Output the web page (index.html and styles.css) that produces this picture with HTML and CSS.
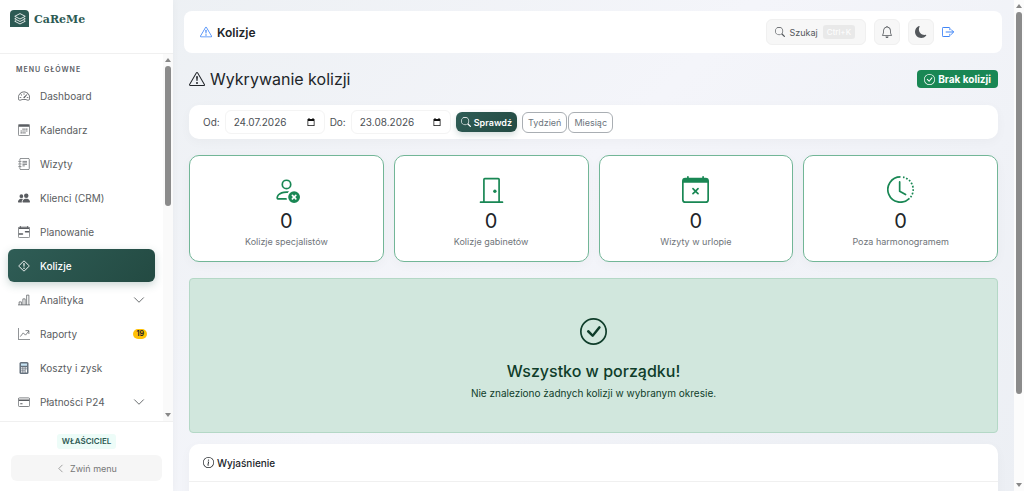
FILE: index.html
```html
<!DOCTYPE html>
<html lang="pl">
<head>
    <meta charset="UTF-8">
    <meta name="viewport" content="width=device-width, initial-scale=1.0">
    <title>Kolizje - CaReMe</title>
    <link rel="stylesheet" href="styles.css">
</head>
<body>
    <!-- Icons -->
    <svg class="sprite" aria-hidden="true">
        <symbol id="i-warning" viewBox="0 0 16 16">
            <path d="M7.938 2.016A.13.13 0 0 1 8.002 2a.13.13 0 0 1 .063.016.15.15 0 0 1 .054.057l6.857 11.667c.036.06.035.124.002.183a.2.2 0 0 1-.054.06.1.1 0 0 1-.066.017H1.146a.1.1 0 0 1-.066-.017.2.2 0 0 1-.054-.06.18.18 0 0 1 .002-.183L7.884 2.073a.15.15 0 0 1 .054-.057m1.044-.45a1.13 1.13 0 0 0-1.96 0L.165 13.233c-.457.778.091 1.767.98 1.767h13.713c.889 0 1.438-.99.98-1.767z"/>
            <path d="M7.002 12a1 1 0 1 1 2 0 1 1 0 0 1-2 0M7.1 5.995a.905.905 0 1 1 1.8 0l-.35 3.507a.552.552 0 0 1-1.1 0z"/>
        </symbol>
        <symbol id="i-search" viewBox="0 0 16 16">
            <path d="M11.742 10.344a6.5 6.5 0 1 0-1.397 1.398h-.001q.044.06.098.115l3.85 3.85a1 1 0 0 0 1.415-1.414l-3.85-3.85a1 1 0 0 0-.115-.1zM12 6.5a5.5 5.5 0 1 1-11 0 5.5 5.5 0 0 1 11 0"/>
        </symbol>
        <symbol id="i-bell" viewBox="0 0 16 16">
            <path d="M8 16a2 2 0 0 0 2-2H6a2 2 0 0 0 2 2M8 1.918l-.797.161A4 4 0 0 0 4 6c0 .628-.134 2.197-.459 3.742-.16.767-.376 1.566-.663 2.258h10.244c-.287-.692-.502-1.49-.663-2.258C12.134 8.197 12 6.628 12 6a4 4 0 0 0-3.203-3.92zM14.22 12c.223.447.481.801.78 1H1c.299-.199.557-.553.78-1C2.68 10.2 3 6.88 3 6c0-2.42 1.72-4.44 4.005-4.901a1 1 0 1 1 1.99 0A5 5 0 0 1 13 6c0 .88.32 4.2 1.22 6"/>
        </symbol>
        <symbol id="i-moon" viewBox="0 0 16 16">
            <path d="M6 .278a.77.77 0 0 1 .08.858 7.2 7.2 0 0 0-.878 3.46c0 4.021 3.278 7.277 7.318 7.277q.792-.001 1.533-.16a.79.79 0 0 1 .81.316.73.73 0 0 1-.031.893A8.35 8.35 0 0 1 8.344 16C3.734 16 0 12.286 0 7.71 0 4.266 2.114 1.312 5.124.06A.75.75 0 0 1 6 .278"/>
        </symbol>
        <symbol id="i-logout" viewBox="0 0 16 16">
            <path fill="none" stroke="currentColor" stroke-width="1.3" stroke-linecap="round" stroke-linejoin="round" d="M10.5 5V3a1 1 0 0 0-1-1h-8a1 1 0 0 0-1 1v10a1 1 0 0 0 1 1h8a1 1 0 0 0 1-1v-2M5.5 8h9.8M12.5 5l3 3-3 3"/>
        </symbol>
        <symbol id="i-check" viewBox="0 0 16 16">
            <path d="M8 15A7 7 0 1 1 8 1a7 7 0 0 1 0 14m0 1A8 8 0 1 0 8 0a8 8 0 0 0 0 16"/>
            <path d="m10.97 4.97-.02.022-3.473 4.425-2.093-2.094a.75.75 0 0 0-1.06 1.06L6.97 11.03a.75.75 0 0 0 1.079-.02l3.992-4.99a.75.75 0 0 0-1.071-1.05"/>
        </symbol>
        <symbol id="i-info" viewBox="0 0 16 16">
            <path d="M8 15A7 7 0 1 1 8 1a7 7 0 0 1 0 14m0 1A8 8 0 1 0 8 0a8 8 0 0 0 0 16"/>
            <path d="m8.93 6.588-2.29.287-.082.38.45.083c.294.07.352.176.288.469l-.738 3.468c-.194.897.105 1.319.808 1.319.545 0 1.178-.252 1.465-.598l.088-.416c-.2.176-.492.246-.686.246-.275 0-.375-.193-.304-.533zM9 4.5a1 1 0 1 1-2 0 1 1 0 0 1 2 0"/>
        </symbol>
        <symbol id="i-down" viewBox="0 0 16 16">
            <path fill="none" stroke="currentColor" stroke-width="1.2" stroke-linecap="round" stroke-linejoin="round" d="m2 5 6 6 6-6"/>
        </symbol>
        <symbol id="i-left" viewBox="0 0 16 16">
            <path fill="none" stroke="currentColor" stroke-width="1.2" stroke-linecap="round" stroke-linejoin="round" d="M11 2 5 8l6 6"/>
        </symbol>
        <symbol id="i-layers" viewBox="0 0 16 16">
            <path fill="none" stroke="currentColor" stroke-width="1.1" stroke-linejoin="round" d="M8 .8 15 4.4 8 8 1 4.4zM3 6.6 1 7.7l7 3.6 7-3.6-2-1.1M3 9.9 1 11l7 3.6 7-3.6-2-1.1"/>
        </symbol>
        <symbol id="i-speed" viewBox="0 0 16 16">
            <path d="M8 4a.5.5 0 0 1 .5.5V6a.5.5 0 0 1-1 0V4.5A.5.5 0 0 1 8 4M3.732 5.732a.5.5 0 0 1 .707 0l.915.914a.5.5 0 1 1-.708.708l-.914-.915a.5.5 0 0 1 0-.707M2 10a.5.5 0 0 1 .5-.5h1.586a.5.5 0 0 1 0 1H2.5A.5.5 0 0 1 2 10m9.5 0a.5.5 0 0 1 .5-.5h1.5a.5.5 0 0 1 0 1H12a.5.5 0 0 1-.5-.5m.754-4.246a.39.39 0 0 0-.527-.02L7.547 9.31a.91.91 0 1 0 1.302 1.258l3.434-4.297a.39.39 0 0 0-.029-.518z"/>
            <path fill-rule="evenodd" d="M0 10a8 8 0 1 1 15.547 2.661c-.442 1.253-1.845 1.602-2.932 1.25C11.309 13.488 9.475 13 8 13c-1.474 0-3.31.488-4.615.911-1.087.352-2.49.003-2.932-1.25A8 8 0 0 1 0 10m8-7a7 7 0 0 0-6.603 9.329c.203.575.923.876 1.68.63C4.397 12.533 6.358 12 8 12s3.604.532 4.923.96c.757.245 1.477-.056 1.68-.631A7 7 0 0 0 8 3"/>
        </symbol>
        <symbol id="i-calendar" viewBox="0 0 16 16">
            <rect x=".5" y=".5" width="15" height="15" rx="1.5" fill="none" stroke="currentColor"/>
            <path d="M1 1h14v2.8H1zM6 6h1.5v1.5H6zm2.5 0H10v1.5H8.5zM11 6h1.5v1.5H11zM3.5 8.5H5V10H3.500zm2.500 0h1.500V10H6zm2.500 0H10V10H8.500zm2.500 0h1.500V10H11zM3.500 11H5v1.500H3.500zm2.500 0h1.500v1.500H6zm2.500 0H10v1.500H8.500z"/>
        </symbol>
        <symbol id="i-journal" viewBox="0 0 16 16">
            <path fill="none" stroke="currentColor" stroke-linecap="round" d="M2.500 3V2A1.500 1.500 0 0 1 4 .5h9.500A1.500 1.500 0 0 1 15 2v12a1.500 1.500 0 0 1-1.500 1.500H4A1.500 1.500 0 0 1 2.500 14v-1M2.500 6v1M2.500 9.500v1M1 4.500h3M1 8h3M1 11.500h3M6.500 4.500h5M6.500 6.500h5M6.500 8.500h5M6.500 10.500h2"/>
        </symbol>
        <symbol id="i-people" viewBox="0 0 16 16">
            <path d="M7 14s-1 0-1-1 1-4 5-4 5 3 5 4-1 1-1 1zm4-6a3 3 0 1 0 0-6 3 3 0 0 0 0 6m-5.784 6A2.24 2.24 0 0 1 5 13c0-1.355.68-2.75 1.936-3.72A6.3 6.3 0 0 0 5 9c-4 0-5 3-5 4s1 1 1 1zM4.500 8a2.500 2.500 0 1 0 0-5 2.500 2.500 0 0 0 0 5"/>
        </symbol>
        <symbol id="i-plan" viewBox="0 0 16 16">
            <path fill="none" stroke="currentColor" d="M2 1.500h12A1.500 1.500 0 0 1 15.500 3v11a1.500 1.500 0 0 1-1.500 1.500H2A1.500 1.500 0 0 1 .5 14V3A1.500 1.500 0 0 1 2 1.500z"/>
            <path d="M1 2h14v2H1zM3 0h1v2H3zm9 0h1v2h-1zM10 6.500h5v2h-5a1 1 0 0 1 0-2M1 9.500h5a1 1 0 0 1 0 2H1z"/>
        </symbol>
        <symbol id="i-diamond" viewBox="0 0 16 16">
            <rect x="3" y="3" width="10" height="10" rx="1" transform="rotate(45 8 8)" fill="none" stroke="currentColor" stroke-width="1.2"/>
            <path d="M7.001 11a1 1 0 1 1 2 0 1 1 0 0 1-2 0M7.1 4.995a.905.905 0 1 1 1.8 0l-.35 3.507a.553.553 0 0 1-1.1 0z"/>
        </symbol>
        <symbol id="i-bars" viewBox="0 0 16 16">
            <path fill="none" stroke="currentColor" d="M1.500 14.500v-4h3v4M6.500 14.500v-8h3v8M11.500 14.500v-13h3v13M0 14.500h16"/>
        </symbol>
        <symbol id="i-graph" viewBox="0 0 16 16">
            <path fill="none" stroke="currentColor" stroke-linejoin="round" d="M.5 0v15.500H16M3 11.500l4-5 3 3L14.500 4M10 3.500h4.500V8"/>
        </symbol>
        <symbol id="i-calc" viewBox="0 0 16 16">
            <rect x="2" y="0" width="12" height="16" rx="2" fill="#65717d"/>
            <path fill="#c7e4f4" d="M4 2h8v3H4z"/>
            <path fill="#fff" d="M4 7h2v1.500H4zm3 0h2v1.500H7zm3 0h2v1.500h-2zM4 9.700h2v1.500H4zm3 0h2v1.500H7zM4 12.400h2V14H4zm3 0h2V14H7zm3-2.700h2V14h-2z"/>
        </symbol>
        <symbol id="i-card" viewBox="0 0 16 16">
            <rect x=".5" y="2.500" width="15" height="11.500" rx="1.500" fill="none" stroke="currentColor"/>
            <path d="M1 4.500h14v2H1zM3 9.500h3v1.500H3z"/>
        </symbol>
        <symbol id="i-date" viewBox="0 0 16 16">
            <path fill-rule="evenodd" d="M1 2h2V0h2v2h6V0h2v2h2v14H1zm1.500 4v8.500h11V6z"/>
        </symbol>
        <symbol id="i-person-x" viewBox="0 0 16 16">
            <path d="M11 5a3 3 0 1 1-6 0 3 3 0 0 1 6 0M8 7a2 2 0 1 0 0-4 2 2 0 0 0 0 4m.256 7a4.500 4.500 0 0 1-.229-1.004H3c.001-.246.154-.986.832-1.664C4.484 10.68 5.711 10 8 10q.39 0 .74.025c.226-.341.496-.65.804-.918Q8.844 9.002 8 9c-5 0-6 3-6 4s1 1 1 1z"/>
            <path d="M12.500 16a3.500 3.500 0 1 0 0-7 3.500 3.500 0 0 0 0 7m-.646-4.854.646.647.646-.647a.5.5 0 0 1 .708.708l-.647.646.647.646a.5.5 0 0 1-.708.708l-.646-.647-.646.647a.5.5 0 0 1-.708-.708l.647-.646-.647-.646a.5.5 0 0 1 .708-.708"/>
        </symbol>
        <symbol id="i-door" viewBox="0 0 16 16">
            <path d="M3 2a1 1 0 0 1 1-1h8a1 1 0 0 1 1 1v13h1.500a.5.5 0 0 1 0 1h-13a.5.5 0 0 1 0-1H3zm1 13h8V2H4z"/>
            <path d="M9 9a1 1 0 1 0 2 0 1 1 0 0 0-2 0"/>
        </symbol>
        <symbol id="i-calendar-x" viewBox="0 0 16 16">
            <path d="M6.146 7.146a.5.5 0 0 1 .708 0L8 8.293l1.146-1.147a.5.5 0 1 1 .708.708L8.707 9l1.147 1.146a.5.5 0 0 1-.708.708L8 9.707l-1.146 1.147a.5.5 0 0 1-.708-.708L7.293 9 6.146 7.854a.5.5 0 0 1 0-.708"/>
            <path d="M3.500 0a.5.5 0 0 1 .5.5V1h8V.5a.5.5 0 0 1 1 0V1h1a2 2 0 0 1 2 2v11a2 2 0 0 1-2 2H2a2 2 0 0 1-2-2V3a2 2 0 0 1 2-2h1V.5a.5.5 0 0 1 .5-.5M1 4v10a1 1 0 0 0 1 1h12a1 1 0 0 0 1-1V4z"/>
        </symbol>
        <symbol id="i-clock" viewBox="0 0 16 16">
            <path fill="none" stroke="currentColor" d="M8 .5a7.500 7.500 0 1 0 5.300 12.800"/>
            <path fill="none" stroke="currentColor" stroke-dasharray="1 1" d="M9.500 .65a7.500 7.500 0 0 1 4.400 12"/>
            <path fill="none" stroke="currentColor" stroke-linecap="round" stroke-linejoin="round" d="M7.500 3.500V9l3.500 2"/>
        </symbol>
    </svg>

    <div class="layout">
        <aside class="sidebar">
            <a href="#" class="brand">
                <span class="brand-logo"><svg class="icon"><use href="#i-layers"/></svg></span>
                <span class="brand-name">CaReMe</span>
            </a>

            <div class="menu">
                <nav class="menu-list">
                    <h2 class="menu-title">MENU GŁÓWNE</h2>
                    <a href="#" class="menu-link"><svg class="icon"><use href="#i-speed"/></svg>Dashboard</a>
                    <a href="#" class="menu-link"><svg class="icon"><use href="#i-calendar"/></svg>Kalendarz</a>
                    <a href="#" class="menu-link"><svg class="icon"><use href="#i-journal"/></svg>Wizyty</a>
                    <a href="#" class="menu-link"><svg class="icon"><use href="#i-people"/></svg>Klienci (CRM)</a>
                    <a href="#" class="menu-link"><svg class="icon"><use href="#i-plan"/></svg>Planowanie</a>
                    <a href="#" class="menu-link active"><svg class="icon"><use href="#i-diamond"/></svg>Kolizje</a>
                    <a href="#" class="menu-link"><svg class="icon"><use href="#i-bars"/></svg>Analityka<svg class="icon arrow"><use href="#i-down"/></svg></a>
                    <a href="#" class="menu-link"><svg class="icon"><use href="#i-graph"/></svg>Raporty<span class="count">19</span></a>
                    <a href="#" class="menu-link"><svg class="icon"><use href="#i-calc"/></svg>Koszty i zysk</a>
                    <a href="#" class="menu-link"><svg class="icon"><use href="#i-card"/></svg>Płatności P24<svg class="icon arrow"><use href="#i-down"/></svg></a>
                </nav>
                <div class="scrollbar" aria-hidden="true">
                    <span class="scroll-up"></span>
                    <span class="scroll-thumb menu-thumb"></span>
                    <span class="scroll-down"></span>
                </div>
            </div>

            <div class="sidebar-footer">
                <span class="role">WŁAŚCICIEL</span>
                <button type="button" class="collapse-button"><svg class="icon"><use href="#i-left"/></svg>Zwiń menu</button>
            </div>
        </aside>

        <main class="main">
            <header class="topbar">
                <h1 class="topbar-title"><svg class="icon"><use href="#i-warning"/></svg>Kolizje</h1>
                <div class="topbar-actions">
                    <button type="button" class="tool-button search-button"><svg class="icon"><use href="#i-search"/></svg>Szukaj<kbd class="shortcut">Ctrl+K</kbd></button>
                    <button type="button" class="tool-button" aria-label="Powiadomienia"><svg class="icon"><use href="#i-bell"/></svg></button>
                    <button type="button" class="tool-button" aria-label="Tryb ciemny"><svg class="icon"><use href="#i-moon"/></svg></button>
                    <a href="#" class="logout" aria-label="Wyloguj"><svg class="icon"><use href="#i-logout"/></svg></a>
                </div>
            </header>

            <div class="content">
                <div class="page-head">
                    <h2 class="page-title"><svg class="icon"><use href="#i-warning"/></svg>Wykrywanie kolizji</h2>
                    <span class="status"><svg class="icon"><use href="#i-check"/></svg>Brak kolizji</span>
                </div>

                <form class="filters">
                    <label for="from">Od:</label>
                    <div class="date-field">
                        <input type="text" id="from" class="date-input" name="from" value="24.07.2026">
                        <svg class="icon"><use href="#i-date"/></svg>
                    </div>
                    <label for="to">Do:</label>
                    <div class="date-field">
                        <input type="text" id="to" class="date-input" name="to" value="23.08.2026">
                        <svg class="icon"><use href="#i-date"/></svg>
                    </div>
                    <button type="submit" class="submit-button"><svg class="icon"><use href="#i-search"/></svg>Sprawdź</button>
                    <div class="ranges">
                        <button type="button" class="range-button">Tydzień</button>
                        <button type="button" class="range-button">Miesiąc</button>
                    </div>
                </form>

                <div class="stats">
                    <div class="stat">
                        <svg class="icon"><use href="#i-person-x"/></svg>
                        <span class="stat-value">0</span>
                        <span class="stat-label">Kolizje specjalistów</span>
                    </div>
                    <div class="stat">
                        <svg class="icon"><use href="#i-door"/></svg>
                        <span class="stat-value">0</span>
                        <span class="stat-label">Kolizje gabinetów</span>
                    </div>
                    <div class="stat">
                        <svg class="icon"><use href="#i-calendar-x"/></svg>
                        <span class="stat-value">0</span>
                        <span class="stat-label">Wizyty w urlopie</span>
                    </div>
                    <div class="stat">
                        <svg class="icon"><use href="#i-clock"/></svg>
                        <span class="stat-value">0</span>
                        <span class="stat-label">Poza harmonogramem</span>
                    </div>
                </div>

                <div class="alert">
                    <svg class="icon"><use href="#i-check"/></svg>
                    <h3 class="alert-title">Wszystko w porządku!</h3>
                    <p class="alert-text">Nie znaleziono żadnych kolizji w wybranym okresie.</p>
                </div>

                <section class="card">
                    <h3 class="card-header"><svg class="icon"><use href="#i-info"/></svg>Wyjaśnienie</h3>
                    <div class="card-body"></div>
                </section>
            </div>
        </main>

        <div class="scrollbar page-scrollbar" aria-hidden="true">
            <span class="scroll-up"></span>
            <span class="scroll-thumb page-thumb"></span>
            <span class="scroll-down"></span>
        </div>
    </div>
</body>
</html>
```
FILE: styles.css
```css
* {
  box-sizing: border-box;
}

body {
  margin: 0;
  font-family: Inter, "Noto Sans", sans-serif;
  font-size: 10px;
  color: #212529;
}

h1, h2, h3, p {
  margin: 0;
  font-weight: 400;
}

a {
  color: inherit;
  text-decoration: none;
}

button, input {
  font: inherit;
  color: inherit;
}

button {
  cursor: pointer;
}

.sprite {
  display: none;
}

.icon {
  width: 12px;
  height: 12px;
  flex-shrink: 0;
  fill: currentColor;
}

.layout {
  display: flex;
  height: 100vh;
  overflow: hidden;
  background: linear-gradient(135deg, #ebeff2, #f4f5fa 50%, #eceff4);
}

/* Sidebar */
.sidebar {
  display: flex;
  flex-direction: column;
  width: 173px;
  flex-shrink: 0;
  background: #fff;
  box-shadow: 0 0 8px rgba(0, 0, 0, 0.04);
}

.brand {
  display: flex;
  gap: 5px;
  height: 54px;
  padding: 10px;
  border-bottom: 1px solid #f0f0f0;
}

.brand-logo {
  display: flex;
  align-items: center;
  justify-content: center;
  width: 19px;
  height: 17px;
  border-radius: 4px 4px 0 0;
  background: #2d5a54;
  color: #fff;
}

.brand-name {
  font-family: "DejaVu Serif", serif;
  font-size: 11px;
  font-weight: 700;
  line-height: 20px;
  color: #2d5a54;
}

.menu {
  display: flex;
  flex: 1;
  min-height: 0;
}

.menu-list {
  display: flex;
  flex: 1;
  flex-direction: column;
  gap: 1px;
  padding: 10px 8px 0;
  overflow: hidden;
}

.menu-title {
  padding: 0 8px;
  margin-bottom: 2px;
  font-size: 7px;
  font-weight: 600;
  line-height: 12px;
  letter-spacing: 1px;
  color: #5c6066;
}

.menu-link {
  display: flex;
  align-items: center;
  gap: 10px;
  height: 33px;
  flex-shrink: 0;
  padding: 0 10px;
  border-radius: 6px;
  color: #5a5d61;
}

.menu-link.active {
  background: linear-gradient(135deg, #2f5d56, #234a42);
  box-shadow: 0 3px 8px rgba(45, 90, 84, 0.25);
  color: #fff;
  font-weight: 500;
}

.arrow {
  margin-left: auto;
}

.count {
  margin-left: auto;
  margin-right: -2px;
  padding: 0 3px;
  border-radius: 5px;
  background: #ffc107;
  color: #212529;
  font-size: 7px;
  font-weight: 700;
  line-height: 10px;
}

.sidebar-footer {
  display: flex;
  flex-direction: column;
  align-items: center;
  gap: 6px;
  padding: 12px 11px 10px;
  border-top: 1px solid #f0f0f0;
}

.role {
  padding: 0 5px;
  border-radius: 3px;
  background: #edfcf8;
  color: #2d5a54;
  font-size: 8px;
  font-weight: 600;
  line-height: 15px;
}

.collapse-button {
  display: flex;
  align-items: center;
  justify-content: center;
  gap: 5px;
  width: 100%;
  height: 26px;
  border: none;
  border-radius: 6px;
  background: #f6f6f6;
  color: #777;
  font-size: 9px;
}

.collapse-button .icon {
  width: 9px;
  height: 9px;
}

/* Scrollbars */
.scrollbar {
  display: flex;
  flex-direction: column;
  align-items: center;
  width: 10px;
  flex-shrink: 0;
  padding: 4px 0;
  background: #fafafa;
}

.page-scrollbar {
  background: #fcfcfc;
}

.scroll-up, .scroll-down {
  border: 3px solid transparent;
}

.scroll-up {
  border-top: none;
  border-bottom: 4px solid #888;
}

.scroll-down {
  margin-top: auto;
  border-bottom: none;
  border-top: 4px solid #888;
}

.scroll-thumb {
  width: 6px;
  margin-top: 4px;
  border-radius: 3px;
  background: #8b8b8b;
}

.menu-thumb {
  height: 39%;
}

.page-thumb {
  height: 79%;
}

/* Topbar */
.main {
  display: flex;
  flex: 1;
  flex-direction: column;
  min-width: 0;
  padding: 11px 12px 0 11px;
}

.topbar {
  display: flex;
  align-items: center;
  justify-content: space-between;
  height: 42px;
  flex-shrink: 0;
  padding: 0 48px 0 16px;
  border-radius: 8px;
  background: #fff;
}

.topbar-title {
  display: flex;
  align-items: center;
  gap: 5px;
  font-size: 12px;
  font-weight: 600;
}

.topbar-title .icon, .logout {
  color: #3b82f6;
}

.topbar-actions {
  display: flex;
  align-items: center;
  gap: 8px;
}

.tool-button {
  display: flex;
  align-items: center;
  justify-content: center;
  gap: 5px;
  width: 26px;
  height: 26px;
  padding: 0;
  border: 1px solid #f0f0f0;
  border-radius: 6px;
  background: #f7f7f7;
  color: #54585c;
}

.search-button {
  width: auto;
  padding: 0 10px 0 8px;
  font-size: 9px;
}

.search-button .icon {
  width: 10px;
  height: 10px;
}

.shortcut {
  padding: 0 4px;
  border-radius: 3px;
  background: #e9e9e9;
  color: #fff;
  font-family: inherit;
  font-size: 8px;
  line-height: 14px;
}

.logout {
  display: flex;
}

/* Content */
.content {
  padding: 0 4px 0 5px;
}

.page-head {
  display: flex;
  align-items: center;
  justify-content: space-between;
  height: 52px;
}

.page-title {
  display: flex;
  align-items: center;
  gap: 5px;
  font-size: 16px;
}

.page-title .icon {
  width: 16px;
  height: 16px;
}

.status {
  display: flex;
  align-items: center;
  gap: 3px;
  height: 18px;
  padding: 0 7px;
  border-radius: 4px;
  background: #198754;
  color: #fff;
  font-weight: 700;
}

.filters {
  display: flex;
  align-items: center;
  gap: 5px;
  height: 34px;
  padding: 0 14px;
  margin-bottom: 16px;
  border-radius: 10px;
  background: #fff;
  box-shadow: 0 3px 12px rgba(0, 0, 0, 0.03);
  color: #4b4f54;
}

.date-field {
  display: flex;
  align-items: center;
  width: 100px;
  height: 24px;
  padding: 0 9px 0 8px;
  border: 1px solid #f4f4f4;
  border-radius: 6px;
}

.date-field .icon {
  width: 8px;
  height: 8px;
  color: #111;
}

.date-input {
  flex: 1;
  min-width: 0;
  padding: 0;
  border: none;
  background: none;
}

.submit-button {
  display: flex;
  align-items: center;
  gap: 3px;
  height: 20px;
  padding: 0 5px;
  border: none;
  border-radius: 6px;
  background: linear-gradient(135deg, #2f5d56, #234a42);
  box-shadow: 0 3px 6px rgba(45, 90, 84, 0.2);
  color: #fff;
  font-size: 9px;
  font-weight: 600;
}

.submit-button .icon {
  width: 10px;
  height: 10px;
}

.ranges {
  display: flex;
  gap: 1px;
}

.range-button {
  height: 21px;
  padding: 0 5px;
  border: 1px solid #a9aeb3;
  border-radius: 6px;
  background: #fff;
  color: #6c757d;
  font-size: 9px;
}

.stats {
  display: grid;
  grid-template-columns: repeat(4, 1fr);
  gap: 10px;
  margin-bottom: 16px;
}

.stat {
  display: flex;
  flex-direction: column;
  align-items: center;
  padding: 20px 10px 12px;
  border: 1px solid #72b697;
  border-radius: 10px;
  background: #fff;
  box-shadow: 0 3px 12px rgba(0, 0, 0, 0.03);
}

.stat .icon {
  width: 27px;
  height: 27px;
  margin-bottom: 6px;
  color: #198754;
}

.stat-value {
  font-size: 20px;
  line-height: 25px;
}

.stat-label {
  font-size: 9px;
  line-height: 15px;
  color: #6f7479;
}

.alert {
  display: flex;
  flex-direction: column;
  align-items: center;
  padding: 39px 10px 31px;
  margin-bottom: 11px;
  border: 1px solid #b4d8c6;
  border-radius: 4px;
  background: #d1e7dd;
  color: #0f3d2a;
}

.alert .icon {
  width: 27px;
  height: 27px;
  margin-bottom: 15px;
}

.alert-title {
  font-size: 16px;
  font-weight: 500;
  line-height: 22px;
}

.alert-text {
  margin-top: 4px;
  line-height: 15px;
}

.card {
  border-radius: 10px;
  background: #fff;
  box-shadow: 0 3px 12px rgba(0, 0, 0, 0.03);
}

.card-header {
  display: flex;
  align-items: center;
  gap: 3px;
  height: 38px;
  padding: 0 14px;
  border-bottom: 1px solid #f0f0f0;
  font-size: 10px;
  font-weight: 500;
}

.card-header .icon, .status .icon {
  width: 11px;
  height: 11px;
}

.card-body {
  height: 60px;
}
```
